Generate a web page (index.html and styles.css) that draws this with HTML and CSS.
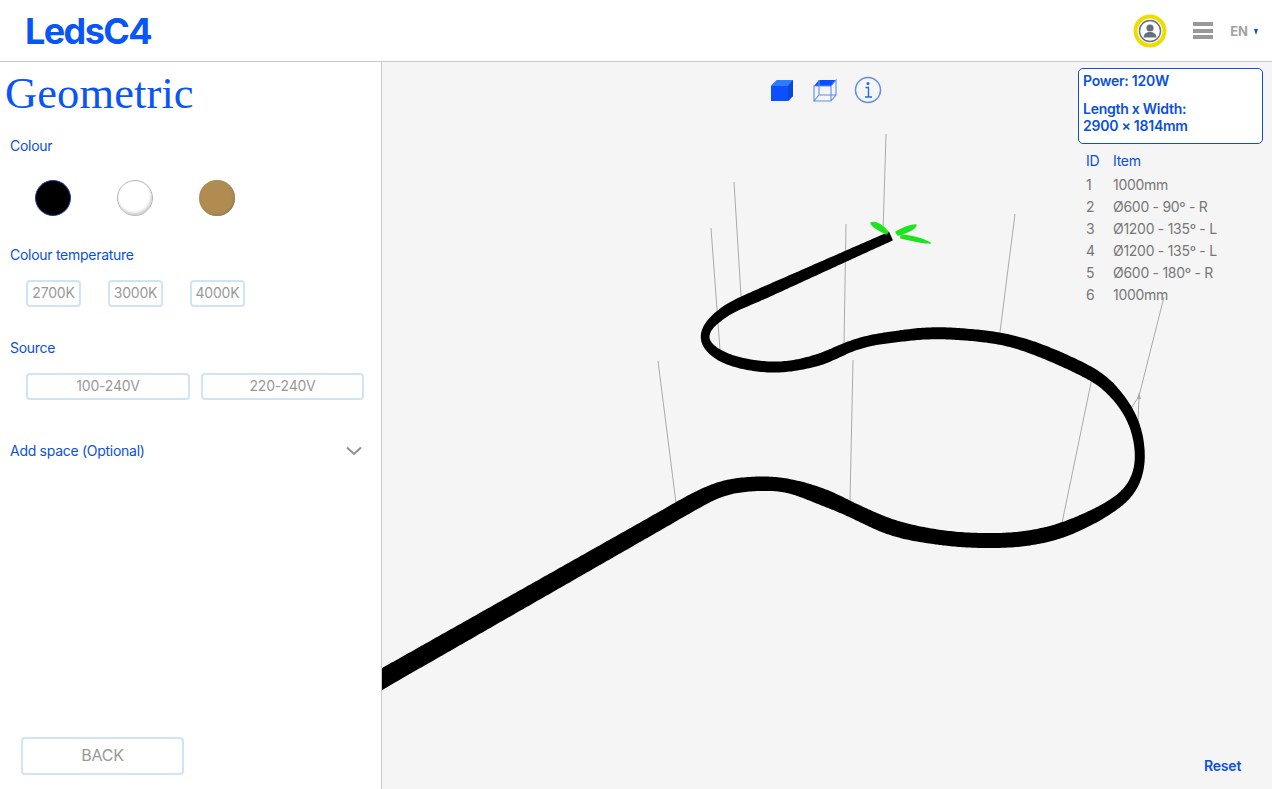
FILE: index.html
```html
<!DOCTYPE html>
<html lang="en">
<head>
<meta charset="utf-8">
<title>LedsC4 Geometric</title>
<link rel="stylesheet" href="styles.css">
</head>
<body>
<header class="topbar">
  <div class="logo">LedsC4</div>
  <div class="top-actions">
    <span class="user">
      <svg viewBox="0 0 34 34" width="34" height="34"><circle cx="17" cy="17" r="14.500" fill="#fff" stroke="#efdc00" stroke-width="4"/><circle cx="17" cy="17" r="10.500" fill="none" stroke="#66707a" stroke-width="1.400"/><circle cx="17" cy="14" r="3.600" fill="#66707a"/><path d="M10.500 23.500c.4-3.800 3-5.500 6.500-5.500s6.100 1.700 6.500 5.500z" fill="#66707a"/></svg>
    </span>
    <span class="burger"><i></i><i></i><i></i></span>
    <span class="lang">EN<b></b></span>
  </div>
</header>
<div class="layout">
  <aside class="side">
    <h1 class="title">Geometric</h1>
    <section class="group group-colour">
      <h2 class="label">Colour</h2>
      <div class="swatches">
        <span class="swatch black"></span>
        <span class="swatch white"></span>
        <span class="swatch bronze"></span>
      </div>
    </section>
    <section class="group group-temp">
      <h2 class="label">Colour temperature</h2>
      <div class="temps">
        <button class="opt temp">2700K</button>
        <button class="opt temp">3000K</button>
        <button class="opt temp">4000K</button>
      </div>
    </section>
    <section class="group group-source">
      <h2 class="label">Source</h2>
      <div class="sources">
        <button class="opt source">100-240V</button>
        <button class="opt source">220-240V</button>
      </div>
    </section>
    <div class="space-row">
      <h2 class="label">Add space (Optional)</h2>
      <svg class="chev" viewBox="0 0 16 10" width="16" height="10"><path d="M1 1.500l7 6.500 7-6.500" fill="none" stroke="#8f8f8f" stroke-width="2"/></svg>
    </div>
    <button class="opt back">BACK</button>
  </aside>
  <main class="stage">
    <svg class="scene" viewBox="382 62 890 727" width="890" height="727">
      <g fill="none" stroke="#aaa" stroke-width="1">
        <path d="M886 134L883 232"/>
        <path d="M734 182L741 296"/>
        <path d="M711 228L720 350"/>
        <path d="M846 224L844 345"/>
        <path d="M1015 214L1000 332"/>
        <path d="M658 361L676 503"/>
        <path d="M853 360L850 501"/>
        <path d="M1092 378L1062 523"/>
        <path d="M1164 297L1139 396L1138 422"/>
        <path d="M1139 396L1132 407"/>
      </g>
      <path fill="#aaa" d="M1139 392L1141 399L1137 399Z"/>
      <path id="track" fill="#000" d=""/>
      <g fill="#1de41d" stroke="#1de41d" stroke-width="1.500" stroke-linejoin="round">
        <path d="M871 223C876 221 883 226 888 232L886 234C880 230 873 228 871 223Z"/>
        <path d="M896 232C903 228 910 225 916 225C915 229 905 233 898 235Z"/>
        <path d="M901 235C912 236 922 238 930 243C922 243 910 240 901 238Z"/>
      </g>
    </svg>
    <div class="tools">
      <svg class="tool-solid" viewBox="0 0 24 24" width="24" height="24"><path d="M1 8l6-6h16v16l-5 5H1z" fill="#0a50ff"/><path d="M7 2h16l-5 6H1z" fill="#2f7bff"/><path d="M18 8l5-6v16l-5 5z" fill="#0c47d8"/></svg>
      <svg viewBox="0 0 26 24" width="26" height="24"><path d="M7 2h17l-5 6H2z" fill="#0a50ff"/><path d="M2 8h17v15H2zM19 8l5-6v15l-5 6M2 23l5-6h17M7 2v15" fill="none" stroke="#5f8de8" stroke-width="1.100"/></svg>
      <svg viewBox="0 0 28 28" width="28" height="28"><circle cx="14" cy="14" r="12.500" fill="none" stroke="#5f8de8" stroke-width="1.500"/><circle cx="14" cy="7.500" r="1.500" fill="#2a68e0"/><path d="M11.500 11.500H14.500V20.500M11 21H18" fill="none" stroke="#2a68e0" stroke-width="1.400"/></svg>
    </div>
    <div class="info">
      <p>Power: 120W</p>
      <p>Length x Width:<br>2900 × 1814mm</p>
    </div>
    <div class="items">
      <span class="head">ID</span><span class="head">Item</span>
      <span>1</span><span>1000mm</span>
      <span>2</span><span>Ø600 - 90º - R</span>
      <span>3</span><span>Ø1200 - 135º - L</span>
      <span>4</span><span>Ø1200 - 135º - L</span>
      <span>5</span><span>Ø600 - 180º - R</span>
      <span>6</span><span>1000mm</span>
    </div>
    <a class="reset">Reset</a>
  </main>
</div>
<script src="scene.js"></script>
</body>
</html>
```
FILE: styles.css
```css
* { box-sizing: border-box; }
html, body { margin: 0; height: 100%; overflow: hidden; }
body { font-family: Inter, "Liberation Sans", sans-serif; font-size: 14px; color: #0b50dc; background: #fff; }

.topbar { height: 62px; border-bottom: 1px solid #c9c9c9; display: flex; align-items: center; justify-content: space-between; padding: 0 14px 0 25px; }
.logo { font-size: 36px; font-weight: 700; color: #0a55f5; letter-spacing: -1.600px; line-height: 1; }
.top-actions { display: flex; align-items: center; }
.user { display: flex; margin-right: 26px; }
.burger { display: flex; flex-direction: column; gap: 2.500px; width: 20px; margin-right: 17px; }
.burger i { display: block; height: 4px; background: #999; }
.lang { font-size: 13px; font-weight: 700; color: #a2a2a2; display: flex; align-items: center; }
.lang b { width: 0; height: 0; margin: 2px 0 0 6px; border-top: 6px solid #0b50dc; border-left: 2.500px solid transparent; border-right: 2.500px solid transparent; }

.layout { display: flex; height: 727px; }
.side { width: 382px; flex: none; border-right: 1px solid #c9c9c9; display: flex; flex-direction: column; padding: 0 19px 14px 10px; }
.title { margin: 3px 0 0 -5px; font: 400 44.500px/56px "Liberation Serif", serif; color: #0a55f5; letter-spacing: .1px; }
.label { margin: 0; font-size: 14px; font-weight: 400; line-height: 18px; letter-spacing: -.28px; color: #0b50dc; }
.group-colour { margin-top: 16px; }
.swatches { display: flex; gap: 46px; margin: 25px 0 0 25px; }
.swatch { width: 36px; height: 36px; border-radius: 50%; flex: none; }
.black { background: #000; border: 1px solid #1a3fb0; }
.white { background: #fff; border: 1px solid #b5b5b5; box-shadow: inset -1px -2px 3px #ccc; }
.bronze { background: #b08c50; box-shadow: inset -1px -1px 2px #8d7a5d; }
.group-temp { margin-top: 30px; }
.temps { display: flex; gap: 27px; margin: 16px 0 0 16px; }
.group-source { margin-top: 32px; }
.sources { display: flex; gap: 11px; margin: 16px 0 0 16px; }
.opt { font-family: inherit; font-size: 14px; letter-spacing: -.2px; color: #999; background: #fff; border: 2px solid #cfe4f5; border-radius: 4px; padding: 0 0 2px; flex: none; }
.temp { width: 55px; height: 27px; }
.source { width: 164px; height: 27px; }
.source + .source { width: 163px; }
.space-row { display: flex; align-items: center; justify-content: space-between; margin-top: 42px; }
.back { width: 163px; height: 38px; margin: auto 0 0 11px; padding-bottom: 3px; font-size: 16px; }

.stage { flex: 1; position: relative; background: #f5f5f5; overflow: hidden; }
.scene { position: absolute; left: 0; top: 0; display: block; }
.tools { position: absolute; left: 388px; top: 14px; display: flex; align-items: center; gap: 16px; }
.tool-solid { margin-right: 2px; }
.info { position: absolute; left: 696px; top: 6px; width: 185px; height: 76px; background: #fff; border: 1px solid #0b50dc; border-radius: 5px; padding: 3px 4px; font-size: 14px; font-weight: 600; line-height: 17px; letter-spacing: -.25px; }
.info p { margin: 0 0 11px; }
.items { position: absolute; left: 704px; top: 89px; display: grid; grid-template-columns: 27px auto; grid-auto-rows: 22px; align-items: center; color: #777; letter-spacing: -.28px; }
.items .head { color: #0b50dc; margin-bottom: 3px; }
.reset { position: absolute; left: 822px; top: 695px; font-weight: 600; letter-spacing: -.2px; }
```
FILE: scene.js
```js
// Centre line of the suspended track as seen in perspective: [x, y, thickness].
var measured = [
  [891, 236, 9.5], [757, 296, 12], [728, 309, 11], [712, 322, 10],
  [702, 336, 8], [712, 351, 10], [735, 362, 11], [773, 367.5, 11], [800, 364.5, 11],
  [825, 358, 12], [848, 347, 11], [870, 340.5, 11], [897, 336.5, 11.500], [938, 333, 12], [1000, 338.5, 12],
  [1043, 351.5, 13], [1090, 373, 13], [1107, 385, 12], [1123, 403, 11], [1135, 425, 10.5], [1140, 450, 10],
  [1139, 470, 10], [1132, 488, 11], [1120, 500, 12], [1102, 512, 13], [1063, 530, 15],
  [1023, 539, 15], [980, 540.5, 15], [940, 537.5, 15], [893, 528, 16], [849, 508.5, 15],
  [823, 497, 17], [790, 486, 14], [762, 483.5, 14.5], [725, 487.5, 15], [695, 501, 16.5],
  [382, 679, 19], [370, 686, 19.5]
];

// Break only the long straight runs up, so that the spline does not overshoot at their ends.
var knots = [measured[0]];
for (var m = 1; m < measured.length; m++) {
  var a0 = measured[m - 1], b0 = measured[m];
  var run = Math.hypot(b0[0] - a0[0], b0[1] - a0[1]);
  var parts = run > 100 ? Math.ceil(run / 35) : 1;
  for (var q = 1; q <= parts; q++) {
    knots.push(a0.map(function (v, k) { return v + (b0[k] - v) * q / parts; }));
  }
}

function catmull(a, b, c, d, t) {
  return 0.5 * (2 * b + (c - a) * t + (2 * a - 5 * b + 4 * c - d) * t * t + (3 * b - a - 3 * c + d) * t * t * t);
}

var dense = [];
for (var i = 0; i < knots.length - 1; i++) {
  var p0 = knots[Math.max(i - 1, 0)], p1 = knots[i], p2 = knots[i + 1], p3 = knots[Math.min(i + 2, knots.length - 1)];
  var steps = Math.max(2, Math.ceil(Math.hypot(p2[0] - p1[0], p2[1] - p1[1]) / 2));
  for (var s = 0; s < steps; s++) {
    var t = s / steps;
    dense.push([0, 1, 2].map(function (k) { return catmull(p0[k], p1[k], p2[k], p3[k], t); }));
  }
}
dense.push(knots[knots.length - 1]);

// Moving average (about 16px each way) to take the jitter out of the hand-measured knots.
var reach = 8, smooth = dense.map(function (p, idx) {
  var r = Math.min(reach, idx, dense.length - 1 - idx), sum = [0, 0, 0];
  for (var j = idx - r; j <= idx + r; j++) {
    sum[0] += dense[j][0]; sum[1] += dense[j][1]; sum[2] += dense[j][2];
  }
  return sum.map(function (v) { return v / (2 * r + 1); });
});

var left = [], right = [];
smooth.forEach(function (p, idx) {
  var a = smooth[Math.max(idx - 2, 0)], b = smooth[Math.min(idx + 2, smooth.length - 1)];
  var dx = b[0] - a[0], dy = b[1] - a[1], len = Math.hypot(dx, dy) || 1, h = p[2] / 2;
  left.push((p[0] + dy / len * h).toFixed(1) + ' ' + (p[1] - dx / len * h).toFixed(1));
  right.unshift((p[0] - dy / len * h).toFixed(1) + ' ' + (p[1] + dx / len * h).toFixed(1));
});
document.getElementById('track').setAttribute('d', 'M' + left.concat(right).join('L') + 'Z');
```
